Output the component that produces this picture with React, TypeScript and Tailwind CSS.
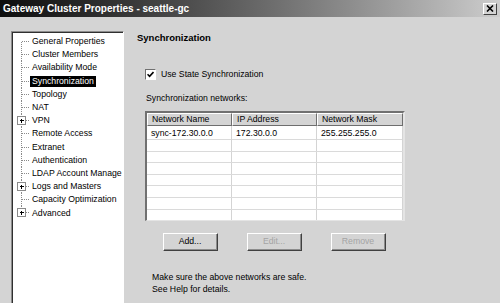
import React from "react";

// ── Tree data ──────────────────────────────────────────────────────────────────

type TreeItem = { label: string; expandable?: boolean; selected?: boolean };

const treeItems: TreeItem[] = [
  { label: "General Properties" },
  { label: "Cluster Members" },
  { label: "Availability Mode" },
  { label: "Synchronization", selected: true },
  { label: "Topology" },
  { label: "NAT" },
  { label: "VPN", expandable: true },
  { label: "Remote Access" },
  { label: "Extranet" },
  { label: "Authentication" },
  { label: "LDAP Account Manage" },
  { label: "Logs and Masters", expandable: true },
  { label: "Capacity Optimization" },
  { label: "Advanced", expandable: true },
];

function TreeGutter({ first, last, expandable }: { first: boolean; last: boolean; expandable?: boolean }) {
  const h = 13.2;
  const mid = h / 2;
  return (
    <svg width="17" height={h} className="shrink-0" shapeRendering="crispEdges">
      <line x1="8.5" y1={first ? mid : 0} x2="8.5" y2={last ? mid : h} stroke="#8a8a8a" strokeDasharray="1 1" />
      <line x1="8.5" y1={mid} x2="17" y2={mid} stroke="#8a8a8a" strokeDasharray="1 1" />
      {expandable && (
        <>
          <rect x="4.5" y={mid - 4} width="8" height="8" fill="#fff" stroke="#8a8a8a" />
          <line x1="6.5" y1={mid} x2="11" y2={mid} stroke="#000" />
          <line x1="8.5" y1={mid - 2} x2="8.5" y2={mid + 2.5} stroke="#000" />
        </>
      )}
    </svg>
  );
}

function Tree() {
  return (
    <div className="ml-[11px] w-[113px] self-stretch border-l border-t border-[#8c8c8c] border-r border-r-white">
      <div className="h-full border-l border-t border-[#303030] bg-white pt-[2px] overflow-hidden">
        {treeItems.map((item, i) => (
          <div key={item.label} className="flex items-center h-[13.2px] whitespace-nowrap">
            <TreeGutter first={i === 0} last={i === treeItems.length - 1} expandable={item.expandable} />
            <span
              className={
                item.selected
                  ? "bg-black text-white px-[2px] leading-[11px]"
                  : "px-[2px] leading-[11px]"
              }
            >
              {item.label}
            </span>
          </div>
        ))}
      </div>
    </div>
  );
}

// ── Table ──────────────────────────────────────────────────────────────────────

const columns = ["Network Name", "IP Address", "Network Mask"];
const rows = [["sync-172.30.0.0", "172.30.0.0", "255.255.255.0"]];

function NetworksTable() {
  const empty = Array.from({ length: 7 });
  return (
    <div className="mt-[7px] ml-[8px] w-[260px] h-[110px] border-l-2 border-t-2 border-l-[#707070] border-t-[#707070] border-r-2 border-b border-r-[#e4e4e4] border-b-[#e4e4e4] bg-white overflow-hidden">
      <div className="grid grid-cols-[85px_85px_86px] h-[13px]">
        {columns.map(c => (
          <div
            key={c}
            className="bg-[#d4d4d4] border-t border-l border-white border-r border-b border-r-[#6e6e6e] border-b-[#6e6e6e] pl-[4px] leading-[11px]"
          >
            {c}
          </div>
        ))}
      </div>
      {rows.map(r => (
        <div key={r[0]} className="grid grid-cols-[85px_85px_86px] h-[14px] border-b border-[#dadada]">
          {r.map((v, j) => (
            <div key={j} className="border-r border-[#d4d4d4] pl-[4px] leading-[14px]">
              {v}
            </div>
          ))}
        </div>
      ))}
      {empty.map((_, i) => (
        <div key={i} className="grid grid-cols-[85px_85px_86px] h-[11.6px] border-b border-[#dadada]">
          <div className="border-r border-[#d4d4d4]" />
          <div className="border-r border-[#d4d4d4]" />
          <div className="border-r border-[#d4d4d4]" />
        </div>
      ))}
    </div>
  );
}

function WinButton({ label, disabled }: { label: string; disabled?: boolean }) {
  return (
    <div className="w-[55px] h-[18px] border-t border-l border-white border-r border-b border-r-[#404040] border-b-[#404040]">
      <div
        className={
          "h-full border-r border-b border-[#8c8c8c] flex items-center justify-center " +
          (disabled ? "text-[#a4a4a4]" : "text-black")
        }
      >
        {label}
      </div>
    </div>
  );
}

// ── Main ───────────────────────────────────────────────────────────────────────

export default function App() {
  return (
    <div className="w-[500px] h-[303px] bg-[#d4d4d4] overflow-hidden flex flex-col text-black text-[8.7px] font-['Liberation_Sans',Arial,sans-serif]">
      {/* Title bar */}
      <div className="h-[17px] shrink-0 flex items-center justify-between pl-[3px] pr-[3px] bg-gradient-to-r from-[#0e0e0e] to-[#cdcdcd]">
        <span className="text-white font-bold text-[10px] leading-[12px]">Gateway Cluster Properties - seattle-gc</span>
        <div className="w-[14px] h-[12px] bg-[#d4d4d4] border-t border-l border-white border-r border-b border-r-[#404040] border-b-[#404040] flex items-center justify-center">
          <svg width="8" height="7" viewBox="0 0 8 7">
            <path d="M1 0.5 L7 6.5 M7 0.5 L1 6.5" stroke="#000" strokeWidth="1.6" />
          </svg>
        </div>
      </div>

      <div className="flex flex-1 min-h-0 pt-[14px]">
        <Tree />

        <div className="ml-[13px] flex flex-col">
          <div className="mt-[1px] font-bold text-[9.5px] leading-[12px]">Synchronization</div>

          <div className="mt-[24px] ml-[8px] flex items-center">
            <div className="w-[11px] h-[11px] bg-white border-l border-t border-[#707070] border-r border-b border-r-white border-b-white flex items-center justify-center">
              <svg width="7" height="7" viewBox="0 0 7 7">
                <path d="M0.5 3.2 L2.6 5.4 L6.5 1" stroke="#000" strokeWidth="1.6" fill="none" />
              </svg>
            </div>
            <span className="ml-[5px] leading-[12px]">Use State Synchronization</span>
          </div>

          <div className="mt-[12px] ml-[9px] leading-[12px]">Synchronization networks:</div>

          <NetworksTable />

          <div className="mt-[12px] ml-[26px] flex gap-[29px]">
            <WinButton label="Add..." />
            <WinButton label="Edit..." disabled />
            <WinButton label="Remove" disabled />
          </div>

          <div className="mt-[21px] ml-[15px] leading-[11.5px]">
            <div>Make sure the above networks are safe.</div>
            <div>See Help for details.</div>
          </div>
        </div>
      </div>
    </div>
  );
}
